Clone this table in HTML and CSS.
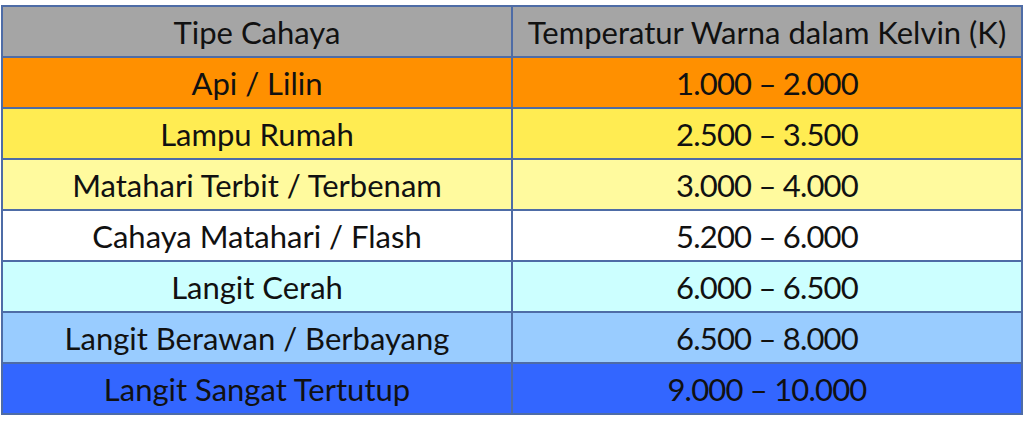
FILE: index.html
```html
<!DOCTYPE html>
<html>
<head>
<meta charset="utf-8">
<link rel="stylesheet" href="styles.css">
</head>
<body>
<table class="kelvin">
  <tr class="r-head"><td>Tipe Cahaya</td><td>Temperatur Warna dalam Kelvin (K)</td></tr>
  <tr class="r-fire"><td>Api / Lilin</td><td class="num">1.000 – 2.000</td></tr>
  <tr class="r-home"><td>Lampu Rumah</td><td class="num">2.500 – 3.500</td></tr>
  <tr class="r-sunrise"><td>Matahari Terbit / Terbenam</td><td class="num">3.000 – 4.000</td></tr>
  <tr class="r-sun"><td>Cahaya Matahari / Flash</td><td class="num">5.200 – 6.000</td></tr>
  <tr class="r-clear"><td>Langit Cerah</td><td class="num">6.000 – 6.500</td></tr>
  <tr class="r-cloud"><td>Langit Berawan / Berbayang</td><td class="num">6.500 – 8.000</td></tr>
  <tr class="r-over"><td>Langit Sangat Tertutup</td><td class="num">9.000 – 10.000</td></tr>
</table>
</body>
</html>
```
FILE: styles.css
```css
html, body {
  margin: 0;
  background: #ffffff;
}
body {
  padding: 5px 1px 0 1px;
  font-family: Lato, "Open Sans", sans-serif;
}
.kelvin {
  width: 1022px;
  border-collapse: collapse;
  table-layout: fixed;
  border: 2px solid #4e6ca6;
}
.kelvin td {
  width: 50%;
  height: 49px;
  padding: 0;
  border: 2px solid #4e6ca6;
  text-align: center;
  vertical-align: middle;
  font-size: 31px;
  color: #111111;
  line-height: 32px;
}
.kelvin td.num {
  letter-spacing: -0.8px;
}
.r-head td { background: #a5a5a5; }
.r-fire td { background: #ff9000; }
.r-home td { background: #ffec52; }
.r-sunrise td { background: #fffa9e; }
.r-sun td { background: #ffffff; }
.r-clear td { background: #ccffff; }
.r-cloud td { background: #99ccff; }
.r-over td { background: #3366ff; }
```
